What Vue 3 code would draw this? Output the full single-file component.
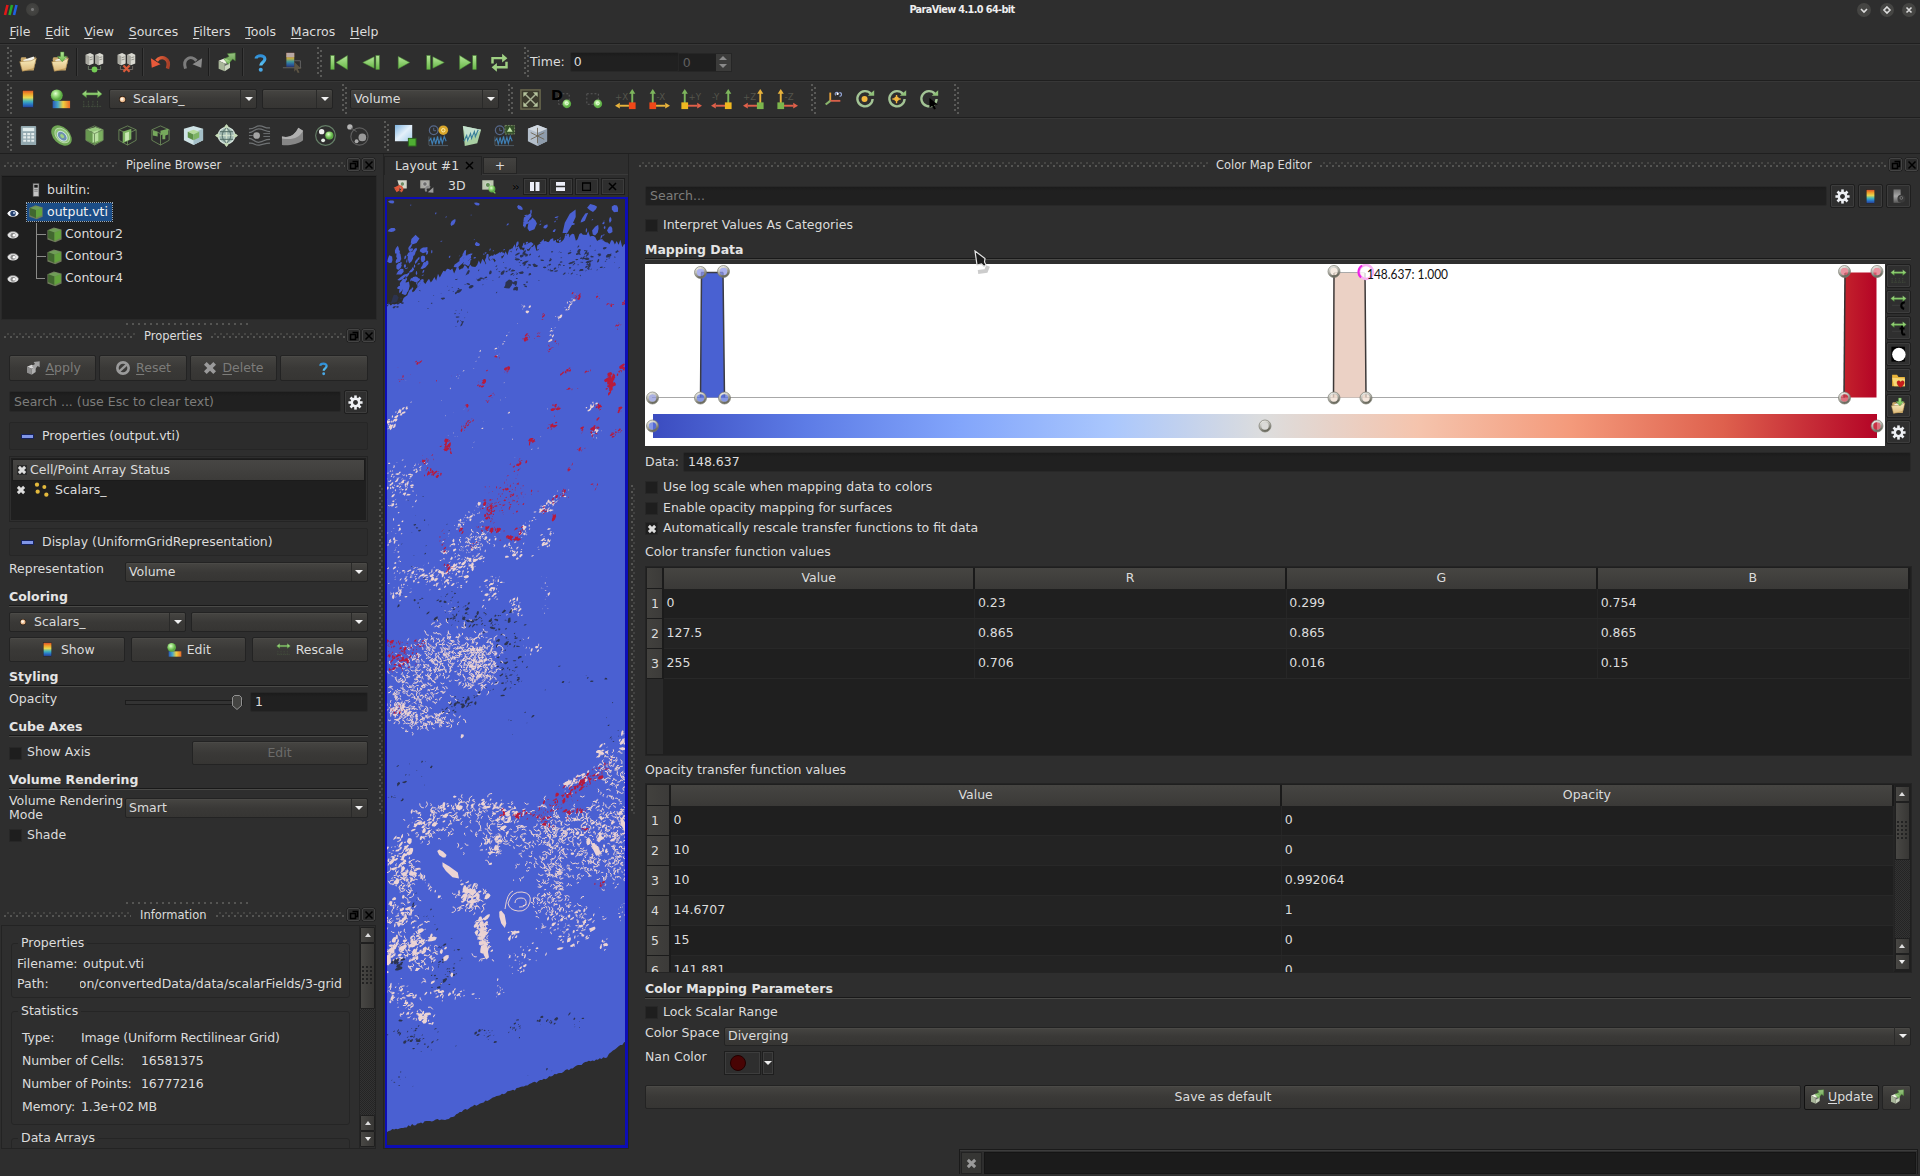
<script setup>
import { h } from 'vue'

const cube = (a, b, c) =>
  `<path d="M3 6l10-3 8 3-9 3z" fill="${a}"/><path d="M3 6l9 3v12l-9-4z" fill="${b}"/><path d="M12 9l9-3v11l-9 4z" fill="${c}"/>`
const rainbow = (x, y, w, hh) => `<rect x="${x}" y="${y}" width="${w}" height="${hh}" fill="url(#rainbowV)" stroke="#222" stroke-width=".6"/>`
const server = (x) =>
  `<path d="M${x} 3l5-2 4 2v10l-5 2-4-2z" fill="#d8d8d0"/><path d="M${x} 3l4 1.500v10.500l-4-2z" fill="#a8a8a0"/><path d="M${x + 4.5} 6.500l3.500-1M${x + 4.5} 9l3.500-1" stroke="#77776f" stroke-width=".8"/>`
const folder =
  '<path d="M3 8l1-2h5l1 2h6l4-3v4l-2 12H5z" fill="#c9a86a"/><path d="M6 9l12-4 2 8-12 4z" fill="#f6f6f0"/><path d="M2 11l13-1 6-3-3 12-13 3z" fill="url(#folderG)" stroke="#a88446" stroke-width=".7"/>'
const greenArrow = (s) => `<g stroke="#4b8a35" stroke-width=".6" fill="url(#greenG)">${s}</g>`
const axis = (lbl, lx, ox, vcol, hcol, bcol, dir) =>
  `<text x="${lx}" y="12" font-family="DejaVu Sans" font-size="9" fill="#55554c">${lbl}</text>
   <path d="M${ox} 16V5" stroke="${vcol}" stroke-width="2"/><path d="M${ox} 1l3.200 5h-6.400z" fill="${vcol}"/>
   <path d="M${ox} 18.500h${dir * 13}" stroke="${hcol}" stroke-width="2"/><path d="M${ox + dir * 18} 18.500l${-dir * 5}-3v6z" fill="${hcol}"/>
   <rect x="${ox - 3.5}" y="15" width="7" height="7" fill="${bcol}"/>`
const G = '#7cb55c', Y = '#e8b33c', R = '#e0604a'
const wire = '<path d="M3 6l9-4 9 4v11l-9 5-9-5zM3 6l9 4 9-4M12 10v12" fill="none" stroke="#6c8a5a" stroke-width=".9"/>'
const gear = (() => {
  let d = ''
  for (let i = 0; i < 8; i++) d += `<rect x="10.200" y="2" width="3.600" height="6" transform="rotate(${i * 45} 12 12)"/>`
  return `<g fill="#eef0f4">${d}</g><circle cx="12" cy="12" r="5.200" fill="none" stroke="#eef0f4" stroke-width="3.400"/>`
})()
const wave = '<path d="M2 18l2-3 1.500 6 2-7 1.500 7 2-8 1.500 8 2-7 1.500 6 2-7 2 5" fill="none" stroke="#3f7fb4" stroke-width="1.200"/><path d="M2 22.500h20M2 13v9" stroke="#5c6c78" stroke-width=".7"/>'
const clock = '<circle cx="7" cy="6.500" r="4.500" fill="none" stroke="#56688a" stroke-width="1.300"/><path d="M7 4v3h2.500" stroke="#56688a" fill="none"/>'
const rot = '<path d="M18.500 6.500A8.300 8.300 0 1 0 20.300 12" fill="none" stroke="#a3c495" stroke-width="2.600"/><path d="M15 8.500h7v-6z" fill="#8fc079"/>'
const rescale = '<path d="M1 6.500l5-4v2.800h12V2.500l5 4-5 4V7.700H6v2.800z" fill="url(#greenG)" stroke="#4b7a3c" stroke-width=".5"/>'
const cubeArrow = (c, a, b) => `<path d="M3 10l7-3 6 3-6 3z" fill="${c}"/><path d="M3 10l7 3v9l-7-3z" fill="${a}"/><path d="M10 13l6-3v8l-6 4z" fill="${b}"/>`
const qmark = '<path d="M7 7.500C7 3.500 17 2.800 17 8c0 3.500-4.700 3.800-4.700 7.500" fill="none" stroke="url(#blueG)" stroke-width="3.600"/><circle cx="12.300" cy="20.300" r="2.300" fill="#49a8e6"/>'

const icons = {
  open: folder,
  recent: folder + '<path d="M12 0h4v5h3.500l-5.500 6-5.500-6H12z" fill="url(#greenG)" stroke="#4b8a35" stroke-width=".6"/>',
  connect: server(2) + server(13) + '<path d="M5 16v4h14v-4" stroke="#6f7f6a" fill="none"/><circle cx="12" cy="20" r="3.300" fill="#74cc55"/>',
  disconnect: server(2) + server(13) + '<path d="M5 16v4h14v-4" stroke="#776f6a" fill="none"/><path d="M8.500 15.500l7 7m0-7l-7 7" stroke="#d95a3a" stroke-width="2.600"/>',
  undo: '<path d="M20 19C24 7 13 3 7.500 10" fill="none" stroke="url(#redG)" stroke-width="4"/><path d="M1 7l1 11 10-4z" fill="#e8593a"/>',
  redo: '<path d="M4 19C0 7 11 3 16.500 10" fill="none" stroke="#7c7c7c" stroke-width="3.400"/><path d="M23 7l-1 11-10-4z" fill="#8b8b8b"/>',
  apply: cubeArrow('#f0f3e6', '#a9b79a', '#cbd6bf') + '<path d="M10 14l4-2v2l-4 2z" fill="#666"/>' + greenArrow('<path d="M9 8l6-3-2-3 9-1v9l-3-2-5 6z" fill-opacity=".8"/>'),
  help: qmark,
  probe: '<rect x="5" y="1" width="9" height="16" fill="url(#rainbowV)" opacity=".75"/><rect x="5" y="1" width="9" height="5" fill="#b8a8a4"/><path d="M1 18h21M14 10h7v8" stroke="#6a6a6a" fill="none"/><path d="M14 11l8 8-4 .300 2 4-2 .700-2-4-2 2.500z" fill="#5d5544"/>',
  first: greenArrow('<rect x="2" y="4" width="4" height="16"/><path d="M21 4v16L8 12z"/>'),
  prev: greenArrow('<rect x="17" y="4" width="4" height="16"/><path d="M15 5.500v13L2 12z"/>'),
  play: greenArrow('<path d="M6 5v14L19 12z"/>'),
  next: greenArrow('<rect x="2" y="4" width="4" height="16"/><path d="M9 5.500v13L22 12z"/>'),
  last: greenArrow('<rect x="18" y="4" width="4" height="16"/><path d="M3 4v16l13-8z"/>'),
  loop: '<path d="M4 13V7h12M20 11v6.500H8" fill="none" stroke="#9fd083" stroke-width="2.800"/><path d="M15 2l6 5-6 5zM9 12.500l-6 5 6 5z" fill="#9fd083"/>',
  bar: rainbow(6, 2.5, 12, 19),
  editmap: '<rect x="4" y="14" width="19" height="8" fill="url(#rainbowH)"/><circle cx="8.500" cy="8" r="6.500" fill="url(#greenR)"/>',
  rescale: rescale + '<path d="M2 20h20M3 14v7M8 14v7M13 14v7M18 14v7" stroke="#45513f" stroke-width="1" stroke-dasharray="2 1"/>',
  rescaleC: rescale + '<path d="M3 16h18" stroke="#444"/><path d="M21 12c-6-1-7 8-1 9" fill="none" stroke="#000" stroke-width="3"/>',
  rescaleT: rescale + '<path d="M3 16h18" stroke="#444"/><path d="M17 8v9c0 4 2 4 4.500 3M13.500 12h7" fill="none" stroke="#000" stroke-width="3"/>',
  reset: '<rect x="2" y="2" width="20" height="20" fill="#3b3a2c" stroke="#6a694f" stroke-width="1.500"/><path d="M6 6l12 12M18 6L6 18" stroke="#a9b394" stroke-width="1.500"/><path d="M4.500 4.500h5l-5 5zM19.500 4.500v5l-5-5zM4.500 19.500v-5l5 5zM19.500 19.500h-5l5-5z" fill="#b4c39c"/>',
  zoomD: '<rect x="8" y="6" width="11" height="11" fill="none" stroke="#5d5d5d" stroke-dasharray="2 2"/><text x="0" y="12.500" font-family="DejaVu Sans" font-weight="bold" font-size="15" fill="#000">D</text><circle cx="16.500" cy="16.500" r="4.500" fill="url(#greenR)"/><circle cx="16.500" cy="16" r="1.500" fill="none" stroke="#e8ffd8"/>',
  zoomB: '<rect x="4" y="6" width="12" height="11" fill="none" stroke="#5d5d5d" stroke-dasharray="2 2"/><circle cx="15.500" cy="16.500" r="4.500" fill="url(#greenR)"/><circle cx="15.500" cy="16" r="1.500" fill="none" stroke="#e8ffd8"/>',
  px: axis('+X', 0, 18, G, Y, '#f04818', -1), mx: axis('-X', 10, 6, G, Y, '#f04818', 1),
  py: axis('+Y', 10, 6, G, R, '#f0b820', 1), my: axis('-Y', 1, 18, G, R, '#f0b820', -1),
  pz: axis('+Z', 0, 18, Y, R, '#7cb54c', -1), mz: axis('-Z', 10, 6, Y, R, '#7cb54c', 1),
  orient: '<path d="M9 14V5" stroke="#e8a33c" stroke-width="2"/><path d="M9 14h11" stroke="#d8604a" stroke-width="2"/><path d="M9 14l-5 4" stroke="#8ab56c" stroke-width="2.400"/><path d="M18 6c-2-3-5 0-3 2M19 5c3 0 3 4 0 4" fill="none" stroke="#94a6d8" stroke-width="1.200"/><circle cx="17" cy="6.500" r="1.200" fill="#fff"/>',
  center: rot + '<circle cx="11.500" cy="12" r="3.300" fill="#f3b73e"/>',
  resetc: rot + '<path d="M11.500 7.500v9M7 12h9" stroke="#f3b73e" stroke-width="1.500"/><circle cx="11.500" cy="12" r="2.600" fill="#f3b73e"/>',
  pick: rot + '<path d="M12.500 11l9 7-4 .500 2 4-2 1-2-4-3 2z" fill="#000"/>',
  calc: '<rect x="4" y="2" width="16" height="20" rx="1" fill="#93a9b0"/><rect x="6" y="4" width="12" height="3.500" fill="#e2eeee"/><path d="M6.500 10.500h12M6.500 14h12M6.500 17.500h12" stroke="#e4ecec" stroke-width="2.300" stroke-dasharray="3 1.200"/>',
  contour: '<ellipse cx="12" cy="12" rx="12.500" ry="8.500" transform="rotate(45 12 12)" fill="#6fa655"/><ellipse cx="12.500" cy="11.500" rx="9" ry="6" transform="rotate(45 12 12)" fill="#8cc474" stroke="#bcd9ac"/><ellipse cx="13" cy="12" rx="6" ry="4" transform="rotate(45 12 12)" fill="#6c8fae" stroke="#cfe0ea"/><ellipse cx="13" cy="12" rx="2.500" ry="1.600" transform="rotate(45 12 12)" fill="#9fd083"/>',
  clip: cube('#97c77d', '#67994f', '#7cb060') + '<path d="M10 8l6-1.500v11l-6 2z" fill="#b9e0a0"/>' + wire,
  slice: wire + '<path d="M7 8l9-3v11l-9 4z" fill="#7eb463"/><path d="M9.500 9.500l4-1.500v8.500l-4 1.500z" fill="#c9e8b5"/>',
  thresh: wire + '<path d="M4 7l5 1v5l-5-1zM12 7l8-2v6l-3 1v4h-3v-5l-2 1z" fill="#76a95c"/>',
  extract: '<path d="M2 5l10-3 10 3v12l-10 5-10-5z" fill="#cfe3e6"/><path d="M12 9v13l10-5V5z" fill="#a4bfc8"/><path d="M6 8l6-2 6 2-6 3z" fill="#b6db9b"/><path d="M6 8l6 3v6l-6-3z" fill="#5d9146"/><path d="M12 11l6-3v6l-6 3z" fill="#7eb463"/>',
  glyph: '<circle cx="12" cy="12" r="8.500" fill="#9fb8b0" stroke="#d8e6df" stroke-width="1.500"/><path d="M12 1v22M1 12h22" stroke="#cfe0cc" stroke-width="1.500"/><path d="M12 4c-6 5-6 11 0 16M12 4c6 5 6 11 0 16M5 8h14M5 16h14" fill="none" stroke="#4f6b63"/><path d="M12 0l3 4H9zM12 24l3-4H9zM0 12l4-3v6zM24 12l-4-3v6z" fill="#c6dcb8"/>',
  stream: '<path d="M1 5c7 0 6-3 11-3s6 3 11 2M1 9c5 0 5-4 10-4s7 3 12 3M1 15c5 0 6 5 11 4s5-3 11-3M1 20c6-1 6 3 11 2s6-2 11-2M1 12h4" fill="none" stroke="#6f7274" stroke-width="1.300"/><circle cx="9" cy="12" r="3.500" fill="#a4a4a4"/><path d="M16 10h7M16 13h7" stroke="#6f7274"/>',
  warp: '<path d="M1 13c8 2 14-2 17-9l5 3v10c-5 4-15 6-22 5z" fill="#868686"/><path d="M1 13c8 2 14-2 17-9l5 3c-4 8-12 10-22 8z" fill="#b0b0b0"/>',
  group: '<circle cx="12" cy="12" r="10.300" fill="none" stroke="#647d66" stroke-width="1.200"/><circle cx="16" cy="12" r="4.300" fill="url(#greenR)"/><circle cx="8" cy="8" r="2.800" fill="#eee"/><circle cx="9.500" cy="17" r="2" fill="#e6eee6"/>',
  level: '<circle cx="13" cy="13" r="9" fill="none" stroke="#5e5e5e" stroke-width="1.200"/><circle cx="16" cy="14" r="4" fill="#999"/><circle cx="3" cy="3" r="2.800" fill="#b5b5b5"/><circle cx="10" cy="18" r="2" fill="#aaa"/><path d="M4 4l6 4" stroke="#666"/>',
  select: '<rect x="1" y="1" width="18" height="17" fill="url(#skyG)"/><rect x="15" y="15" width="8" height="8" fill="#4fae33" stroke="#2c661d"/>',
  selT: clock + '<circle cx="17" cy="6.500" r="5" fill="#d9a72c"/><circle cx="17" cy="6.500" r="1.800" fill="none" stroke="#fff0b0"/>' + wave,
  selW: '<path d="M3 2l19 4-4 14-13 3z" fill="#a9cfa3"/><path d="M3 2l19 4-15 13z" fill="#c5e1cf"/><path d="M4 18l3-6 1 5 3-7 1 5 3-7 1 5 3-7" fill="none" stroke="#3a7f98" stroke-width="1.200"/>',
  selT2: clock + '<rect x="12.500" y="1.500" width="10" height="9" fill="#34502a" stroke="#748560" stroke-dasharray="2 1"/><path d="M17.500 3l3 5h-6z" fill="#bfe3a4"/>' + wave,
  box: '<path d="M2 5l10-4 10 4v13l-10 5-10-5z" fill="#b4bfcb"/><path d="M12 9v14l10-5V5z" fill="#8e9cac"/><path d="M2 5l10 4 10-4-10-4z" fill="#d0d8e0"/><path d="M12 4v16M5 9l14 7M19 9L5 16" stroke="#6b6250" stroke-width=".9"/>',
  gear,
  greyapply: cubeArrow('#d8d8d8', '#8f8f8f', '#b0b0b0') + '<path d="M10 9l5-3-2-3 9-1v9l-3-2-4 5z" fill="#a2a2a2"/>',
  no: '<circle cx="12" cy="12" r="8.500" fill="none" stroke="#9a9a9a" stroke-width="4"/><path d="M6.500 17l11-10" stroke="#9a9a9a" stroke-width="3.500"/>',
  del: '<path d="M4 4l16 16M20 4L4 20" stroke="#9a9a9a" stroke-width="6.500"/>',
  cross: '<path d="M4.500 4.500l15 15M19.500 4.500l-15 15" stroke="#dedede" stroke-width="7"/>',
  points: '<g fill="#e3b93c"><circle cx="6" cy="4" r="3.200"/><circle cx="17" cy="7.500" r="3"/><circle cx="7" cy="14.500" r="3.200"/><circle cx="20" cy="19" r="3.200"/></g>',
  dot: '<circle cx="12" cy="12" r="7.500" fill="#2a1a10"/><circle cx="12" cy="12" r="6" fill="#e9b98c"/><circle cx="11" cy="11" r="3.500" fill="#fff3e4"/>',
  cube: '<path d="M2 6l9-4 11 3v14l-9 4-11-4z" fill="#6f7a5c"/>' + cube('#6f9d57', '#41682f', '#62a33c'),
  server: '<rect x="7" y="1" width="10" height="22" fill="#c4c4c4" stroke="#555"/><rect x="9" y="3" width="6" height="5" fill="#1c1c1c"/><path d="M9 11h6M9 14h6" stroke="#777" stroke-width="1.500"/>',
  eye: '<ellipse cx="12" cy="12" rx="11" ry="7" fill="#e4e4e4"/><circle cx="12" cy="12.500" r="5" fill="#8b8b8b"/><circle cx="14" cy="12.500" r="2.500" fill="#fff"/><path d="M1 11C6 3 18 3 23 11" fill="none" stroke="#777" stroke-width="1.500"/>',
  eyeB: '<ellipse cx="12" cy="12.500" rx="11" ry="7" fill="#f4f6fa"/><circle cx="12" cy="13" r="5.500" fill="#24406e"/><circle cx="14" cy="12" r="2" fill="#bcd0ee"/><path d="M1 11C6 3 18 3 23 11" fill="none" stroke="#222" stroke-width="2"/>',
  camU: '<path d="M7 2h15v13H11z" fill="#d3d6c6"/><circle cx="15" cy="8" r="3.500" fill="#6d8a62" stroke="#efefef"/><path d="M12 20c5-3 3-9-3-8" fill="none" stroke="#d95a3a" stroke-width="3.500"/><path d="M1 14l10-5-1 11z" fill="#e0593a"/><path d="M2 15l4 6 4-3z" fill="#e0593a"/>',
  camR: '<path d="M2 2h15v13H2z" fill="#a8a8a2"/><circle cx="9.500" cy="8" r="3.500" fill="#6d6d6d" stroke="#ccc"/><path d="M12 20c-3-4 0-9 6-7" fill="none" stroke="#8a8a8a" stroke-width="3"/><path d="M23 13v9l-9-1z" fill="#9a9a9a"/>',
  camZ: '<path d="M2 2h18v15H2z" fill="#bdc8b0"/><circle cx="11" cy="9.500" r="4" fill="#5f8a52" stroke="#efefef"/><circle cx="17.500" cy="16" r="5.500" fill="url(#greenR)"/><path d="M20 20l3 3" stroke="#7cc95c" stroke-width="2"/>',
  greybar: '<rect x="5" y="2" width="10" height="19" fill="url(#greyV)"/><circle cx="16" cy="15" r="5.500" fill="#3a3a3a"/><circle cx="16" cy="14" r="2" fill="none" stroke="#888"/>',
  circle: '<rect x="2" y="1" width="19" height="21" fill="#000"/><ellipse cx="12.500" cy="12" rx="9.500" ry="9.500" fill="#fff"/>',
  fav: '<path d="M3 4h7l2 3h9v13H3z" fill="#e7b23a"/><path d="M3 8l3 12h15V9z" fill="#f8d874"/><path d="M15 22c-9-6-4-13 0-8 4-5 9 2 0 8z" fill="#c81c1c" stroke="#801010" stroke-width=".5"/>'
}
const Ico = (p) => h('svg', { viewBox: '0 0 24 24', width: p.s || 24, height: p.s || 24, class: 'ico', innerHTML: icons[p.n] })
Ico.props = ['n', 's']

const menus = ['File', 'Edit', 'View', 'Sources', 'Filters', 'Tools', 'Macros', 'Help']
const bar1 = ['open', 'recent', '|', 'connect', 'disconnect', '|', 'undo', 'redo', '|', 'apply', '|', 'help', 'probe']
const vcr = ['first', 'prev', 'play', 'next', 'last', 'loop']
const cams = ['reset', 'zoomD', 'zoomB', 'px', 'mx', 'py', 'my', 'pz', 'mz']
const centers = ['orient', 'center', 'resetc', 'pick']
const filters = ['calc', 'contour', 'clip', 'slice', 'thresh', 'extract', 'glyph', 'stream', 'warp', 'group', 'level']
const sels = ['select', 'selT', 'selW', 'selT2', 'box']
const sideIcons = ['rescale', 'rescaleC', 'rescaleT', 'circle', 'fav', 'recent', 'gear']
const colorRows = [['0', '0.23', '0.299', '0.754'], ['127.5', '0.865', '0.865', '0.865'], ['255', '0.706', '0.016', '0.15']]
const opacityRows = [['0', '0'], ['10', '0'], ['10', '0.992064'], ['14.6707', '1'], ['15', '0'], ['141.881', '0']]
const stats = [['Type:', 'Image (Uniform Rectilinear Grid)', 59], ['Number of Cells:', '16581375', 119], ['Number of Points:', '16777216', 119], ['Memory:', '1.3e+02 MB', 59]]

const nodes = [
  [7.5, 134, '#8f97d8'], [55.5, 134, '#5d74dc'], [79.500, 134, '#5d74dc'], [55.500, 8.500, '#8f97e8'], [78.500, 7.500, '#8f97e8'],
  [689, 7.500, '#f3e6da'], [689, 134, '#f0ddd0'], [721, 134, '#f0ddd0'],
  [1199.500, 134, '#d04050'], [1199.500, 7.500, '#e07080'], [1232, 7.500, '#e07080'],
  [7.500, 162, '#5d74dc'], [620, 162, '#d8d8d4'], [1232, 162, '#d04050']
]

/* volume rendering: seeded speckle clusters */
let seed = 20417
const rnd = () => ((seed = (seed * 1664525 + 1013904223) % 4294967296) / 4294967296)
const gs = () => (rnd() + rnd() + rnd() - 1.5) / 1.1
const edge = (pts, jx) => {
  let out = []
  for (let i = 0; i < pts.length - 1; i++) {
    const [x1, y1] = pts[i], [x2, y2] = pts[i + 1]
    const n = Math.max(2, Math.round((x2 - x1) / 1.8))
    for (let k = 0; k < n; k++) out.push([(x1 + ((x2 - x1) * k) / n).toFixed(1), (y1 + ((y2 - y1) * k) / n + (rnd() - 0.5) * jx).toFixed(1)])
  }
  out.push(pts[pts.length - 1])
  return out
}
const top = edge([[0, 108], [13, 102], [33, 85], [60, 73], [83, 66], [113, 58], [126, 49], [153, 49], [173, 40], [203, 36], [226, 43], [239, 46]], 8)
const bottom = edge([[0, 932], [43, 922], [60, 920], [93, 904], [126, 891], [146, 884], [173, 874], [200, 863], [220, 858], [226, 851], [239, 843]], 2.2)
const body = 'M' + top.map((p) => p.join(' ')).join('L') + 'L' + bottom.reverse().map((p) => p.join(' ')).join('L') + 'Z'

const blob = (x, y, a, b, t) => {
  const n = 7, c = Math.cos(t), s = Math.sin(t)
  let d = ''
  for (let i = 0; i < n; i++) {
    const g = (i / n) * 6.283, k = 0.65 + rnd() * 0.6
    const u = Math.cos(g) * a * k, v = Math.sin(g) * b * k
    d += (i ? 'L' : 'M') + (x + u * c - v * s).toFixed(1) + ' ' + (y + u * s + v * c).toFixed(1)
  }
  return d + 'Z'
}
// cluster: x, y, rx, ry, tilt(deg), count, grain
const scatter = (list, tilt, k = 1, m = 1) =>
  list.map(([x, y, rx, ry, deg, n, g]) => {
    let d = ''
    const t = (deg * Math.PI) / 180, c = Math.cos(t), s = Math.sin(t)
    for (let i = 0; i < n * m; i++) {
      const u = gs() * rx, v = gs() * ry
      const len = g * k * (0.45 + rnd() * rnd() * 1.8)
      d += blob(x + u * c - v * s, y + u * s + v * c, len, len * (0.3 + rnd() * 0.35), ((tilt + (rnd() - 0.5) * 80) * Math.PI) / 180)
    }
    return d
  }).join('')
const worms = (list) =>
  list.map(([x, y, rx, ry, deg, n, g]) => {
    let d = ''
    const t = (deg * Math.PI) / 180, c = Math.cos(t), s = Math.sin(t)
    const f = (q) => q.toFixed(1)
    for (let i = 0; i < n; i++) {
      const u = gs() * rx, v = gs() * ry
      const a = rnd() * 6.28, l = g * (0.6 + rnd())
      d += `M${f(x + u * c - v * s)} ${f(y + u * s + v * c)}q${f(Math.cos(a) * l)} ${f(Math.sin(a) * l)} ${f(Math.cos(a + 0.9) * l * 1.6)} ${f(Math.sin(a + 0.9) * l * 1.6)}`
    }
    return d
  }).join('')

const islands =
  scatter([[24, 62, 16, 22, -50, 30, 3], [20, 85, 18, 12, -30, 20, 4], [77, 60, 9, 7, 0, 16, 3.6], [110, 50, 60, 8, -15, 16, 1.4], [60, 30, 60, 28, 0, 10, 1.4], [180, 28, 55, 14, 0, 18, 1.6], [140, 18, 8, 12, 20, 8, 2.6], [150, 46, 90, 4, -14, 36, 3]], -55) +
  blob(183, 23, 12, 4.500, -1.15) + blob(206, 9, 5.500, 4, -0.3) + blob(145, 26, 8, 4.500, -0.9) + blob(228, 9, 4, 4, 0) + blob(223, 31, 5, 2.500, -1.3) + blob(197, 19, 6, 2, -0.9) + blob(66, 23, 4, 2, -0.9) + blob(28, 41, 6, 3, -0.9) + blob(37, 51, 5, 3, 0) + blob(5, 31, 4, 2.500, 0) + blob(3, 61, 3, 4, 0) + blob(90, 5, 3.500, 1.500, 0.2) + blob(133, 9, 3, 2, 0.7) + blob(90, 45, 3, 2, 0) + blob(4, 3, 3, 1.500, 0)
const holes = scatter([
  [185, 62, 60, 16, -8, 80, 1.8], [198, 62, 8, 14, 0, 26, 2.3], [128, 78, 30, 14, -50, 34, 3], [100, 78, 45, 10, -22, 26, 2], [60, 92, 50, 10, -25, 16, 1.3], [8, 104, 10, 5, -20, 10, 3.5], [70, 119, 10, 8, 0, 12, 1.5],
  [35, 330, 35, 60, 0, 22, 1.2], [86, 420, 40, 15, 12, 70, 2], [112, 430, 26, 30, 0, 40, 1.8], [40, 400, 40, 10, 0, 20, 1.4], [122, 472, 22, 26, 0, 60, 1.6], [76, 503, 24, 8, -20, 40, 2], [130, 520, 18, 14, 0, 6, 1.3], [190, 478, 40, 15, 0, 8, 1.6],
  [24, 574, 28, 20, 0, 12, 1.5], [8, 597, 8, 4, 0, 8, 1.3], [225, 545, 10, 40, 0, 12, 1.2], [60, 765, 16, 22, 0, 40, 2], [12, 766, 8, 6, 0, 12, 3], [35, 722, 22, 26, 0, 16, 1.5], [30, 838, 32, 12, 10, 40, 1.8], [100, 836, 12, 8, 0, 18, 1.7], [130, 830, 12, 12, 0, 12, 1.7], [160, 822, 10, 12, -40, 12, 1.7], [190, 822, 8, 9, 0, 7, 1.5], [10, 883, 18, 10, 0, 8, 1.4], [160, 872, 30, 10, 0, 3, 1.3]
], -30, 0.8)
const whiteBlobs = scatter([
  [15, 212, 16, 3, -42, 18, 2], [4, 225, 4, 5, 0, 8, 2], [12, 285, 20, 22, -30, 80, 1.5], [30, 270, 14, 4, -40, 14, 1.4], [8, 335, 8, 30, 0, 22, 1.3],
  [78, 320, 22, 5, -42, 36, 1.3], [85, 343, 30, 14, -20, 80, 1.4], [76, 365, 24, 8, -18, 50, 1.8], [42, 376, 48, 14, 8, 120, 1.6], [12, 392, 14, 12, 0, 26, 1.5], [106, 390, 10, 20, 10, 36, 1.5], [128, 408, 7, 9, 0, 26, 1.5], [125, 352, 10, 8, 0, 24, 1.6], [157, 343, 16, 6, -45, 26, 1.6], [160, 308, 30, 5, -38, 38, 1.5], [139, 330, 6, 12, 30, 16, 1.4], [205, 206, 7, 4, -30, 8, 1.8], [184, 104, 12, 3, -55, 14, 1.6], [172, 118, 4, 4, 0, 6, 1.6], [165, 134, 3, 8, 20, 8, 1.3], [138, 107, 6, 6, 0, 6, 1.2], [208, 235, 7, 8, 0, 10, 1.3], [158, 390, 6, 28, 0, 12, 1.1], [62, 410, 6, 8, 0, 8, 1.3], [80, 170, 30, 5, -45, 7, 1.1], [115, 145, 30, 5, -60, 8, 1.1], [120, 220, 90, 50, 0, 22, .9], [145, 448, 14, 10, 0, 12, 1.2],
  [92, 462, 18, 22, 0, 70, 1.7], [16, 510, 18, 10, 10, 40, 1.6],
  [60, 611, 40, 12, -18, 46, 2], [110, 608, 30, 8, 8, 40, 1.9], [36, 630, 14, 16, 0, 30, 2], [14, 652, 16, 14, 0, 34, 2.2], [18, 678, 18, 18, 20, 40, 2.6], [42, 686, 24, 3, 50, 20, 1.4], [83, 696, 16, 11, 50, 40, 2.6], [96, 735, 7, 28, -8, 44, 2.8], [118, 618, 16, 16, 0, 30, 2.2], [106, 648, 14, 15, 0, 36, 2.4], [14, 716, 18, 14, 0, 36, 2.2], [26, 750, 32, 26, 0, 74, 2.5], [5, 752, 6, 22, 20, 24, 2.8], [60, 794, 40, 8, 8, 30, 1.9], [36, 818, 16, 6, 15, 24, 2.2], [16, 798, 18, 12, 30, 28, 2], [190, 738, 18, 8, -30, 18, 2.2], [216, 745, 5, 6, 0, 10, 1.6], [183, 722, 34, 18, 0, 56, 1.6], [236, 543, 3, 12, 0, 14, 2.2], [216, 551, 5, 7, 0, 12, 2], [188, 582, 28, 5, -28, 34, 2], [126, 734, 7, 4, -30, 8, 2.6], [205, 632, 28, 26, 0, 60, 2.3], [140, 755, 24, 12, 0, 22, 1.4], [132, 770, 10, 6, 0, 10, 1.3], [112, 790, 4, 10, 0, 10, 1.5], [74, 537, 3, 2, 0, 5, 1.3], [235, 715, 5, 12, 0, 10, 1.2]
], -45, 0.85, 1.15) + blob(62, 671, 11, 4, 0.7) + blob(55, 655, 6, 3, 0.8) + blob(115, 719, 9, 3, 1.3) + blob(209, 650, 8, 3, 1.1) + blob(98, 752, 9, 3, 1.4) + blob(236, 625, 7, 2.5, 1.3)
const whiteWorms = worms([
  [62, 455, 34, 30, 0, 230, 1.9], [93, 462, 22, 28, 0, 160, 2.4], [30, 492, 40, 28, 0, 190, 1.8], [16, 512, 20, 14, 10, 80, 2.1], [45, 522, 30, 9, -8, 90, 1.8], [30, 465, 26, 20, 0, 70, 1.5],
  [60, 612, 38, 16, -12, 44, 2.4], [110, 630, 36, 28, 0, 90, 2.4], [166, 632, 26, 26, 0, 120, 2.4], [166, 674, 16, 34, 0, 100, 2.3], [205, 622, 40, 34, -20, 130, 2.4], [205, 664, 38, 24, 0, 120, 1.8], [233, 620, 10, 60, 0, 70, 2], [224, 570, 15, 20, -40, 56, 2.2], [18, 676, 18, 22, 0, 50, 2.6], [85, 700, 14, 18, 30, 46, 2.6], [96, 738, 7, 26, -6, 40, 2.4], [26, 750, 30, 28, 0, 70, 2.4], [140, 655, 20, 30, 0, 40, 1.5], [160, 703, 20, 14, 0, 46, 1.9], [183, 718, 32, 18, 0, 50, 1.8], [80, 350, 34, 22, -30, 34, 1.5], [230, 662, 10, 26, 0, 50, 1.4], [48, 630, 36, 22, 0, 40, 1.9], [14, 716, 20, 18, 0, 30, 2.2], [16, 800, 22, 16, 20, 24, 2.2]
]) + 'M121 704q4-12 14-11t8 10q-3 10-12 9t-10-8M128 704q0-5 6-5t5 6q-3 4-7 3M118 710q2-16 8-18'
const reds = scatter([
  [190, 97, 4, 5, 0, 12, 1.7], [158, 117, 4, 3, 0, 6, 1.4], [140, 138, 4, 4, 0, 12, 1.8], [152, 136, 5, 3, 0, 5, 1.2], [165, 147, 9, 5, -30, 12, 1.3], [110, 158, 3, 3, 0, 6, 1.3], [120, 171, 5, 3, -40, 9, 1.6], [94, 185, 5, 3, -30, 14, 1.8], [31, 163, 4, 2, 0, 7, 1.4], [224, 183, 5, 11, 15, 46, 2.4], [235, 170, 3, 9, 25, 18, 2.1], [223, 106, 4, 3, 0, 7, 1.4], [237, 103, 2, 3, 0, 5, 1.6], [211, 97, 3, 3, 0, 5, 1.3], [231, 127, 4, 8, 20, 9, 1.1], [180, 172, 7, 2, -20, 9, 1.5], [200, 172, 6, 2, 0, 6, 1.3], [184, 191, 9, 3, 0, 6, 1.4], [168, 207, 4, 4, 0, 8, 1.6], [80, 208, 3, 4, 0, 7, 1.2], [103, 199, 9, 3, -40, 12, 1.2], [80, 226, 10, 3, -35, 18, 1.4], [60, 247, 5, 8, -10, 30, 1.9], [46, 274, 8, 5, 0, 24, 1.7], [38, 262, 10, 6, -40, 14, 1.2], [166, 226, 4, 8, 20, 14, 1.6], [145, 242, 3, 3, 0, 9, 1.7], [211, 206, 4, 5, 0, 12, 1.7], [228, 234, 7, 3, -35, 14, 2], [208, 230, 4, 10, 15, 24, 1.6], [193, 250, 4, 3, 0, 10, 1.7], [196, 233, 2, 5, 0, 6, 1.5], [183, 269, 4, 4, 0, 7, 1.4], [133, 265, 9, 4, -30, 14, 1.7], [208, 288, 4, 4, -40, 6, 1.2], [233, 210, 3, 8, 0, 9, 1.5], [14, 180, 6, 2, -30, 6, 1.1],
  [120, 298, 28, 20, -35, 90, 1.3], [103, 312, 7, 12, 0, 40, 1.6], [104, 330, 16, 3, 5, 26, 1.9], [122, 339, 8, 2.500, 0, 18, 2], [132, 332, 4, 4, 0, 10, 1.6], [166, 318, 3, 3, 0, 9, 2.2], [157, 312, 4, 3, 0, 8, 1.8], [178, 294, 5, 5, 0, 9, 1.5], [168, 302, 7, 5, -45, 10, 1.4], [60, 369, 4, 6, 0, 10, 1.7], [56, 340, 4, 20, 0, 12, 1.3], [74, 331, 3, 3, 0, 6, 1.6], [86, 345, 5, 5, 0, 6, 1.3], [60, 175, 60, 20, 0, 8, .9],
  [12, 457, 20, 15, -10, 120, 1.6], [30, 445, 10, 5, 0, 18, 1.2], [10, 512, 10, 6, 0, 14, 1.2], [3, 445, 4, 6, 0, 12, 2],
  [178, 596, 26, 8, -28, 46, 2.1], [203, 579, 18, 6, -30, 40, 1.9], [220, 567, 8, 3, -55, 12, 1.3], [152, 617, 26, 5, 5, 34, 1.7], [190, 612, 16, 3, 0, 18, 1.9], [116, 614, 4, 5, 0, 10, 1.6], [131, 617, 4, 4, 0, 9, 1.9], [158, 624, 8, 3, 30, 10, 1.6], [199, 630, 4, 3, 0, 5, 1.6], [216, 686, 8, 4, 0, 8, 1.1], [168, 608, 30, 9, -15, 24, 1]
], -50, 0.8)
</script>

<template>
  <div class="app">
    <svg class="defs" width="0" height="0">
      <defs>
        <linearGradient id="rainbowV" x2="0" y2="1"><stop offset="0" stop-color="#d8502c" /><stop offset=".2" stop-color="#f09a28" /><stop offset=".42" stop-color="#e8d850" /><stop offset=".62" stop-color="#48b8b8" /><stop offset=".8" stop-color="#2878c8" /><stop offset="1" stop-color="#283c90" /></linearGradient>
        <linearGradient id="rainbowH"><stop offset="0" stop-color="#2858b8" /><stop offset=".3" stop-color="#48a8c8" /><stop offset=".6" stop-color="#f0d040" /><stop offset="1" stop-color="#e86828" /></linearGradient>
        <linearGradient id="folderG" x2="0" y2="1"><stop offset="0" stop-color="#fbf0c4" /><stop offset="1" stop-color="#dcb878" /></linearGradient>
        <linearGradient id="greenG" x2="0" y2="1"><stop offset="0" stop-color="#b4e698" /><stop offset="1" stop-color="#68b848" /></linearGradient>
        <linearGradient id="redG"><stop offset="0" stop-color="#f0643c" /><stop offset="1" stop-color="#a84028" /></linearGradient>
        <linearGradient id="blueG" x2="0" y2="1"><stop offset="0" stop-color="#2f8fd8" /><stop offset="1" stop-color="#5cc4f4" /></linearGradient>
        <linearGradient id="skyG" x2="1" y2="1"><stop offset="0" stop-color="#7fb4e0" /><stop offset=".5" stop-color="#e4f0fa" /><stop offset="1" stop-color="#a8cdea" /></linearGradient>
        <linearGradient id="greyV" x2="0" y2="1"><stop offset="0" stop-color="#6f6f6f" /><stop offset=".5" stop-color="#a8a8a8" /><stop offset="1" stop-color="#555" /></linearGradient>
        <radialGradient id="greenR" cx=".4" cy=".35"><stop offset="0" stop-color="#e4ffd4" /><stop offset=".5" stop-color="#98dc7c" /><stop offset="1" stop-color="#5cac44" /></radialGradient>
        <linearGradient id="coolwarm"><stop offset="0" stop-color="#3b4cc0" /><stop offset=".125" stop-color="#5d7ce6" /><stop offset=".25" stop-color="#82a5fb" /><stop offset=".375" stop-color="#aac7fd" /><stop offset=".5" stop-color="#dddddd" /><stop offset=".625" stop-color="#f5c4ad" /><stop offset=".75" stop-color="#f49a7b" /><stop offset=".875" stop-color="#de604d" /><stop offset="1" stop-color="#b40426" /></linearGradient>
        <linearGradient id="ringG" x1="0" y1="0" x2=".4" y2="1"><stop offset="0" stop-color="#f4f4f0" /><stop offset=".55" stop-color="#b0b0a8" /><stop offset="1" stop-color="#6c6c60" /></linearGradient>
        <linearGradient id="redBar"><stop offset="0" stop-color="#c3222c" /><stop offset="1" stop-color="#b40426" /></linearGradient>
      </defs>
    </svg>

    <header class="titlebar">
      <svg class="logo" width="16" height="12" viewBox="0 0 16 12"><path d="M3 11L5.500 1" stroke="#e01818" stroke-width="2.600" /><path d="M7.500 11L10 1" stroke="#28a828" stroke-width="2.600" /><path d="M12 11l2.500-10" stroke="#2060e0" stroke-width="2.600" /></svg>
      <span class="orb"></span>
      <span class="wtitle">ParaView 4.1.0 64-bit</span>
      <svg class="wbtns" width="62" height="16" viewBox="0 0 62 16"><g fill="#454543"><circle cx="8" cy="8" r="7" /><circle cx="31" cy="8" r="7" /><circle cx="53" cy="8" r="7" /></g><g fill="none" stroke="#ddd" stroke-width="1.600"><path d="M5 7l3 3 3-3M31 5l3 3-3 3-3-3zM50.500 5.500l5 5m0-5l-5 5" /></g></svg>
    </header>
    <nav class="menubar"><span v-for="m in menus" :key="m"><u>{{ m[0] }}</u>{{ m.slice(1) }}</span></nav>

    <div class="toolbar">
      <i class="grip first"></i>
      <template v-for="(n, i) in bar1" :key="i"><i v-if="n === '|'" class="sep"></i><b v-else class="tb"><Ico :n="n" :s="21" /></b></template>
      <i class="grip"></i>
      <b v-for="n in vcr" :key="n" class="tb"><Ico :n="n" :s="21" /></b>
      <i class="grip"></i>
      <span class="time">Time:</span><div class="field tfield">0</div>
      <div class="spin"><span>0</span><em><i class="up"></i><i class="down"></i></em></div>
    </div>
    <div class="toolbar">
      <i class="grip first"></i>
      <b v-for="n in ['bar', 'editmap', 'rescale']" :key="n" class="tb"><Ico :n="n" :s="22" /></b>
      <div class="combo c1"><Ico n="dot" :s="11" /><span>Scalars_</span><i></i></div>
      <div class="combo c2"><i></i></div>
      <i class="grip g2"></i>
      <div class="combo c3"><span>Volume</span><i></i></div>
      <i class="grip g3"></i>
      <b v-for="n in cams" :key="n" class="tb"><Ico :n="n" :s="23" /></b>
      <i class="grip"></i>
      <b v-for="n in centers" :key="n" class="tb"><Ico :n="n" :s="22" /></b>
      <i class="grip g4"></i>
    </div>
    <div class="toolbar last">
      <i class="grip first"></i>
      <b v-for="n in filters" :key="n" class="tb w33"><Ico :n="n" :s="23" /></b>
      <i class="grip g5"></i>
      <b v-for="n in sels" :key="n" class="tb w33"><Ico :n="n" :s="23" /></b>
    </div>

    <main class="main">
      <aside class="left">
        <div class="dock tall"><i class="dots"></i><span>Pipeline Browser</span><i class="dots"></i><b class="db"><svg width="10" height="10"><path d="M3.500 1.500h5v5h-2M1.500 3.500h5v5h-5z" /></svg></b><b class="db"><svg width="10" height="10"><path d="M1.500 1.500l7 7m0-7l-7 7" /></svg></b></div>
        <div class="tree">
          <div class="trow"><i class="eye"></i><i class="stub"></i><Ico n="server" :s="14" /><span>builtin:</span></div>
          <div class="trow"><i class="eye"><Ico n="eyeB" :s="12" /></i><div class="sel"><Ico n="cube" :s="16" /><span>output.vti</span></div></div>
          <div v-for="n in 3" :key="n" class="trow"><i class="eye"><Ico n="eye" :s="12" /></i><i class="branch" :class="{ end: n === 3 }"></i><Ico n="cube" :s="17" /><span>Contour{{ n + 1 }}</span></div>
        </div>
        <div class="hsplit"><i class="dots"></i></div>
        <div class="dock"><i class="dots"></i><span>Properties</span><i class="dots"></i><b class="db"><svg width="10" height="10"><path d="M3.500 1.500h5v5h-2M1.500 3.500h5v5h-5z" /></svg></b><b class="db"><svg width="10" height="10"><path d="M1.500 1.500l7 7m0-7l-7 7" /></svg></b></div>
        <section class="props">
          <div class="btns dis">
            <button><Ico n="greyapply" :s="16" /><span><u>A</u>pply</span></button><button><Ico n="no" :s="16" /><span><u>R</u>eset</span></button><button><Ico n="del" :s="14" /><span><u>D</u>elete</span></button><button><Ico n="help" :s="15" /></button>
          </div>
          <div class="srow"><div class="field ph">Search ... (use Esc to clear text)</div><b class="sq"><Ico n="gear" :s="17" /></b></div>
          <div class="group"><i class="minus"></i>Properties (output.vti)</div>
          <div class="list"><div class="lhead"><i class="ck"><Ico n="cross" :s="10" /></i>Cell/Point Array Status</div><div class="lrow"><Ico n="cross" :s="10" /><Ico class="pts" n="points" :s="16" />Scalars_</div></div>
          <div class="group g6"><i class="minus"></i>Display (UniformGridRepresentation)</div>
          <div class="frow"><label>Representation</label><div class="combo f1"><span>Volume</span><i></i></div></div>
          <h4>Coloring</h4>
          <div class="frow"><div class="combo cs"><Ico n="dot" :s="10" /><span>Scalars_</span><i></i></div><div class="combo f1"><i></i></div></div>
          <div class="btns three"><button><Ico n="bar" :s="17" />Show</button><button><Ico n="editmap" :s="16" />Edit</button><button><Ico n="rescale" :s="15" />Rescale</button></div>
          <h4>Styling</h4>
          <div class="frow"><label>Opacity</label><div class="slider"><svg width="10" height="15"><path d="M.5 2.500l2-2h5l2 2v8l-4.500 4-4.500-4z" fill="#444442" stroke="#aaa" stroke-width=".8" /></svg></div><div class="field of">1</div></div>
          <h4>Cube Axes</h4>
          <div class="frow axes"><i class="cb"></i><span>Show Axis</span><button class="dim">Edit</button></div>
          <h4>Volume Rendering</h4>
          <div class="frow vr"><label class="two">Volume Rendering<br />Mode</label><div class="combo f1"><span>Smart</span><i></i></div></div>
          <div class="frow shade"><i class="cb"></i><span>Shade</span></div>
        </section>
        <div class="hsplit h2"><i class="dots"></i></div>
        <div class="dock inf"><i class="dots"></i><span>Information</span><i class="dots"></i><b class="db"><svg width="10" height="10"><path d="M3.500 1.500h5v5h-2M1.500 3.500h5v5h-5z" /></svg></b><b class="db"><svg width="10" height="10"><path d="M1.500 1.500l7 7m0-7l-7 7" /></svg></b></div>
        <div class="info">
          <div class="ibody">
            <div class="ig p"><span class="lg">Properties</span>
              <div class="ir"><span>Filename:</span><em>output.vti</em></div>
              <div class="ir path"><span>Path:</span><em><b>on/convertedData/data/scalarFields/3-grid</b></em></div>
            </div>
            <div class="ig s"><span class="lg">Statistics</span>
              <div v-for="s in stats" :key="s[0]" class="ir st"><span :style="{ width: s[2] + 'px' }">{{ s[0] }}</span>{{ s[1] }}</div>
            </div>
            <div class="ig d"><span class="lg">Data Arrays</span></div>
          </div>
          <div class="sb"><b><i class="up"></i></b><b class="thumb t1"></b><i class="track"></i><b><i class="up"></i></b><b><i class="down"></i></b></div>
        </div>
      </aside>

      <i class="vsplit"></i>

      <section class="mid">
        <div class="tabs"><div class="tab">Layout #1<svg width="9" height="9"><path d="M1 1l7 7m0-7l-7 7" stroke="#000" stroke-width="1.500" /></svg></div><div class="plus">+</div></div>
        <div class="viewbar">
          <Ico n="camU" :s="15" /><Ico n="camR" :s="15" /><span class="three-d">3D</span><Ico n="camZ" :s="15" />
          <span class="more">»</span>
          <b><svg width="10" height="9"><path d="M0 0h4v9H0zM5.500 0h4v9h-4z" fill="#eceef8" /></svg></b><b><svg width="10" height="9"><path d="M0 0h9v3.700H0zM0 5.300h9V9H0z" fill="#eceef8" /></svg></b><b><svg width="9" height="9"><path d="M.5 1h8v7.500h-8z" fill="none" stroke="#000" stroke-width="1.400" /></svg></b><b><svg width="9" height="9"><path d="M1 1l7 7m0-7l-7 7" stroke="#000" stroke-width="1.500" /></svg></b>
        </div>
        <div class="render">
          <svg width="239" height="946" viewBox="0 0 239 946">
            <path :d="body" fill="#4a60d2" />
            <path :d="islands" fill="#4a60d2" />
            <path :d="holes" fill="#2c3350" />
            <path :d="whiteBlobs" fill="#ecd4d4" />
            <path :d="whiteWorms" fill="none" stroke="#ead2d2" stroke-width="1" />
            <path :d="reds" fill="#b81a3c" />
          </svg>
        </div>
      </section>

      <i class="vsplit v2"></i>

      <section class="right">
        <div class="dock tall"><i class="dots"></i><span>Color Map Editor</span><i class="dots"></i><b class="db"><svg width="10" height="10"><path d="M3.500 1.500h5v5h-2M1.500 3.500h5v5h-5z" /></svg></b><b class="db"><svg width="10" height="10"><path d="M1.500 1.500l7 7m0-7l-7 7" /></svg></b></div>
        <div class="rbody">
          <div class="rsearch"><div class="field ph">Search...</div><b class="sq"><Ico n="gear" :s="17" /></b><b class="sq"><Ico n="bar" :s="17" /></b><b class="sq"><Ico n="greybar" :s="17" /></b></div>
          <div class="crow c0"><i class="cb"></i>Interpret Values As Categories</div>
          <h4>Mapping Data</h4>
          <div class="maprow">
            <svg class="map" width="1240" height="182" viewBox="0 0 1240 182">
              <rect width="1240" height="182" fill="#fff" />
              <path d="M7 133.500h1193" stroke="#a8a8a8" />
              <path d="M56.500 8.500H78L79.500 133.500H55.500z" fill="#4961d2" /><path d="M56.500 8.500L55.500 133.500M78 8.500L79.500 133.500M56 8.500h22" stroke="#3c3c44" stroke-width="1.500" />
              <path d="M689 8.500H720L721 133.500H688.500z" fill="#ebd1c5" /><path d="M689 9L688.500 133.500M720 9l1 124.500" stroke="#3c3838" stroke-width="1.500" /><path d="M689 8.500h31" stroke="#aaa" />
              <path d="M1200 8.500h31.500v125H1199z" fill="url(#redBar)" /><path d="M1200 9l-1 124.500" stroke="#333" stroke-width="1.500" />
              <rect x="8" y="150" width="1224" height="24" fill="url(#coolwarm)" />
              <g v-for="(n, i) in nodes" :key="i"><circle :cx="n[0]" :cy="n[1]" r="4" :fill="n[2]" fill-opacity=".75" /><circle :cx="n[0]" :cy="n[1]" r="4.800" fill="none" stroke="url(#ringG)" stroke-width="2.200" /><circle :cx="n[0]" :cy="n[1]" r="6" fill="none" stroke="#77776c" stroke-width=".7" /></g>
              <circle cx="721" cy="8" r="7" fill="#fff" fill-opacity=".8" stroke="#f8b0f4" stroke-width="2.500" /><path d="M717 1.500a7.500 7.500 0 0 0-1 12" fill="none" stroke="#f020e8" stroke-width="2" />
              <text x="722" y="15" textLength="81" lengthAdjust="spacingAndGlyphs" font-size="13" font-family="Lato, sans-serif" fill="#111">148.637: 1.000</text>
            </svg>
            <div class="side"><b v-for="n in sideIcons" :key="n" class="sq"><Ico :n="n" :s="17" /></b></div>
          </div>
          <div class="datarow"><span>Data:</span><div class="field">148.637</div></div>
          <div class="checks">
            <div class="crow"><i class="cb"></i>Use log scale when mapping data to colors</div>
            <div class="crow"><i class="cb"></i>Enable opacity mapping for surfaces</div>
            <div class="crow"><i class="cb"><Ico n="cross" :s="10" /></i>Automatically rescale transfer functions to fit data</div>
          </div>
          <div class="tl">Color transfer function values</div>
          <div class="table t1">
            <div class="tr th"><b></b><span v-for="c in ['Value', 'R', 'G', 'B']" :key="c">{{ c }}</span></div>
            <div v-for="(r, i) in colorRows" :key="i" class="tr"><b>{{ i + 1 }}</b><span v-for="(c, j) in r" :key="j">{{ c }}</span></div>
            <div class="rest"></div>
          </div>
          <div class="tl t2l">Opacity transfer function values</div>
          <div class="table t2">
            <div class="tin">
              <div class="tr th"><b></b><span>Value</span><span>Opacity</span></div>
              <div v-for="(r, i) in opacityRows" :key="i" class="tr"><b>{{ i + 1 }}</b><span v-for="(c, j) in r" :key="j">{{ c }}</span></div>
            </div>
            <div class="sb"><b><i class="up"></i></b><b class="thumb t3"></b><i class="track"></i><b><i class="up"></i></b><b><i class="down"></i></b></div>
          </div>
          <h4 class="hp">Color Mapping Parameters</h4>
          <div class="crow lock"><i class="cb"></i>Lock Scalar Range</div>
          <div class="prow"><label>Color Space</label><div class="combo f1"><span>Diverging</span><i></i></div></div>
          <div class="prow nan"><label>Nan Color</label><b class="nb"><i></i></b><b class="nd"><i class="down"></i></b></div>
          <div class="foot"><button class="save">Save as default</button><button class="upd"><Ico n="apply" :s="16" /><span><u>U</u>pdate</span></button><button class="ib"><Ico n="apply" :s="16" /></button></div>
        </div>
      </section>
    </main>
    <footer class="status"><div class="sbox"><b><Ico n="del" :s="11" /></b><div class="prog"></div></div></footer>

    <svg class="cursor" width="20" height="26" viewBox="0 0 20 26"><path d="M4 22l8-1 2-5" stroke="#0003" stroke-width="4" fill="none" /><path d="M1 1l10 7.500-.5 3.500 1.500 3-2 1.500-2.500-2.500-4.500 1z" fill="#1c1c1c" stroke="#e4e4e4" stroke-width="1.200" /></svg>
  </div>
</template>

<style>
html, body { margin: 0; background: #2e2e2e; overflow: hidden; }
</style>
<style scoped>
* { box-sizing: border-box; }
.app { position: relative; width: 1920px; height: 1176px; background: #2e2e2e; color: #dcdcdc; font: 12.5px/16px "DejaVu Sans", Verdana, sans-serif; display: flex; flex-direction: column; overflow: hidden; white-space: nowrap; }
i, em { font-style: normal; } b { font-weight: normal; }
.defs { position: absolute; }
.ico { flex: none; display: block; overflow: visible; }
.titlebar { height: 21px; display: flex; align-items: center; flex: none; padding-left: 2px; }
.orb { width: 13px; height: 13px; border-radius: 50%; background: radial-gradient(circle, #777 1px, #454543 2px, #3a3a38); margin: -2px 0 0 8px; }
.logo { margin-top: -1px; }
.wtitle { flex: 1; text-align: center; font: bold 10.8px "DejaVu Sans Condensed", "DejaVu Sans", sans-serif; color: #eee; padding-left: 29px; margin-top: -2px; letter-spacing: -.6px; }
.wbtns { margin-right: 2px; margin-top: -2px; }
.menubar { height: 22px; flex: none; display: flex; align-items: center; gap: 14.800px; padding-left: 9.500px; }
u { text-underline-offset: 2px; }
.toolbar { height: 37px; flex: none; display: flex; align-items: center; border-top: 1px solid #1f1f1f; box-shadow: inset 0 1px #373737; }
.toolbar.last { height: 36px; }
.tb { width: 32px; display: flex; justify-content: center; flex: none; }
.w33 { width: 33px; }
.sep { width: 2px; height: 28px; background: #1c1c1c; border-right: 1px solid #3a3a3a; }
.grip { width: 15px; height: 30px; flex: none; background: radial-gradient(circle at 1px 1px, #5a5a58 .7px, transparent 1.200px) 9px 0 / 30px 5px repeat-y, radial-gradient(circle at 1px 1px, #5a5a58 .7px, transparent 1.200px) 12px 3px / 30px 5px repeat-y; }
.grip.first { width: 12px; background-position: 7px 0, 10px 3px; }
.g5 { width: 14px; }
.time { margin-right: 5px; }
.field { background: linear-gradient(#1b1b1b, #202020 4px); border: 1px solid #282828; border-radius: 2px; display: flex; align-items: center; padding-left: 4px; }
.ph { color: #7d7d7b; }
.tfield { width: 109px; height: 20px; margin-right: 1px; padding-left: 3px; }
.spin { width: 54px; height: 19px; display: flex; background: #1f1f1f; border: 1px solid #262626; color: #606060; margin-left: -2px; }
.spin span { flex: 1; padding-left: 4px; line-height: 18px; }
.spin em { width: 15px; background: #3b3b3a; display: flex; flex-direction: column; justify-content: space-around; align-items: center; }
.up { border: 4px solid transparent; border-top: 0; border-bottom: 4px solid #ddd; }
.down { border: 4px solid transparent; border-bottom: 0; border-top: 4px solid #eee; }
.spin .up, .spin .down { border-bottom-color: #8a8a8a; } .spin .down { border-top-color: #8a8a8a; border-bottom: 0; }
.combo, button { background: linear-gradient(#464542, #3a3937 50%, #363533); border: 1px solid #232323; border-radius: 2px; box-shadow: inset 0 1px #4b4a47; color: #dcdcdc; font: inherit; }
.combo { height: 20px; display: flex; align-items: center; padding-left: 3px; }
.combo span { flex: 1; }
.combo > i { width: 16px; height: 18px; margin-left: auto; border-left: 1px solid #2a2a29; flex: none; display: flex; align-items: center; justify-content: center; }
.combo > i::before { content: ''; border: 4px solid transparent; border-bottom: 0; border-top: 4px solid #f0f0f0; }
.c1 { width: 148px; margin: 0 5px 0 1px; padding-left: 7px; } .c1 span { margin-left: 5px; }
.c2 { width: 71px; } .g2 { width: 17px; }
.c3 { width: 149px; } .g3 { width: 15px; }
.main { flex: 1; display: flex; border-top: 1px solid #1f1f1f; min-height: 0; }
.left { width: 377px; flex: none; display: flex; flex-direction: column; }
.dock { height: 15px; flex: none; display: flex; align-items: center; padding: 0 1px 0 4px; font-size: 11.500px; }
.dock.tall { height: 21px; }
.dock span { margin: 0 9px; }
.dots { flex: 1; height: 6px; background: radial-gradient(circle at 1px 1px, #5c5c5a .6px, transparent 1.300px) 0 3px / 6px 6px, radial-gradient(circle at 1px 1px, #4a4a48 .6px, transparent 1.300px) 3px 0 / 6px 6px; }
.db { width: 13px; height: 13px; border: 1px solid #444; border-radius: 2px; margin-left: 2px; display: flex; align-items: center; justify-content: center; background: #2a2a2a; box-shadow: 0 0 0 .5px #1c1c1c; }
.db svg { fill: none; stroke: #000; stroke-width: 1.500; flex: none; }
.left .dock { padding-right: 2px; }
.left .dock .dots:first-child { flex: 0 0 113px; }
.left .dock:not(.tall) .dots:first-child { flex-basis: 131px; }
.left .dock.inf .dots:first-child { flex-basis: 127px; }
.tree { height: 145px; margin: 0 0 0 1px; background: #1f1f1f; border: 1px solid #292929; box-shadow: inset 0 1px #181818; padding-top: 3px; flex: none; }
.trow { height: 22px; display: flex; align-items: center; }
.trow .eye { width: 25px; padding-left: 5px; height: 12px; display: flex; margin-top: 2px; }
.stub { width: 2px; }
.trow > span { margin-left: 2px; }
.trow .stub + .ico { margin: 0; }
.trow .stub + .ico + span { margin-left: 4px; }
.sel { display: flex; align-items: center; height: 18px; background: #1b4d87; outline: 1px dotted #9ab; color: #f2f2f2; padding: 0 4px 0 1px; gap: 3px; }
.branch { width: 10px; height: 22px; margin-left: 9px; border-left: 1px solid #8a8a88; background: linear-gradient(#8a8a88, #8a8a88) 0 11px / 100% 1px no-repeat; }
.branch.end { border-left-color: transparent; background: linear-gradient(#8a8a88, #8a8a88) -1px 11px / 100% 1px no-repeat, linear-gradient(#8a8a88, #8a8a88) 0 0 / 1px 12px no-repeat; background-origin: border-box; }
.hsplit { height: 8px; flex: none; display: flex; align-items: center; padding-left: 126px; } .hsplit .dots { flex: 0 0 124px; height: 3px; background: radial-gradient(circle at 1px 1px, #5c5c5a .6px, transparent 1.300px) 0 0 / 6px 6px; }
.h2 { margin-top: 56px; }
.props { margin: 0 0 0 9px; width: 358.500px; }
.btns { display: flex; gap: 3px; margin-top: 12px; height: 26px; }
.btns button { flex: 1; display: flex; align-items: center; justify-content: center; gap: 5px; padding: 0; }
.dis { color: #777; } .dis button { color: #7c7c7a; }
.srow { display: flex; gap: 3px; margin-top: 9px; height: 24px; }
.srow .field { flex: 1; height: 21px; margin-top: 1px; }
.sq { width: 24px; height: 24px; flex: none; border: 1px solid #1e1e1e; border-radius: 2px; box-shadow: inset 0 0 0 1px #3d3d3d; background: #2f2f2f; display: flex; align-items: center; justify-content: center; }
.group { margin-top: 8px; height: 28px; border: 1px solid #262626; background: #2c2c2c; border-radius: 2px; display: flex; align-items: center; padding-left: 11px; }
.g6 { margin-top: 6px; }
.minus { width: 13px; height: 5px; border: 1px solid #16225c; background: #8096e8; margin-right: 8px; }
.list { margin-top: 6px; height: 66px; background: #1f1f1f; border: 1px solid #242424; padding: 2px; box-shadow: inset 0 0 0 1px #2e2e2e; }
.lhead { height: 22px; background: linear-gradient(#474644, #3c3b39); border: 1px solid #1b1b1b; display: flex; align-items: center; padding-left: 4px; gap: 3px; }
.lhead .ck { background: #2a2a2a; }
.lrow { height: 18px; display: flex; align-items: center; padding-left: 4px; gap: 6px; } .pts { margin-left: 1px; }
.frow { display: flex; height: 20px; margin-top: 6px; align-items: center; }
.frow label { width: 116px; line-height: 14px; align-self: flex-start; }
.f1 { flex: 1; }
h4 { margin: 7px 0 0; font: bold 12.500px/16px "DejaVu Sans", sans-serif; border-bottom: 1px solid #191919; box-shadow: 0 1px #4a4a48; height: 17px; color: #e4e4e4; }
.cs { width: 177px; margin-right: 5px; padding-left: 8px; } .cs span { margin-left: 6px; }
.three { margin-top: 5px; height: 25px; gap: 6px; }
.slider { width: 118px; height: 5px; border: 1px solid #1c1c1c; background: #333; display: flex; align-items: center; justify-content: flex-end; margin-right: 7px; }
.of { flex: 1; height: 20px; }
.cb { width: 13px; height: 13px; background: #1e1e1e; border: 1px solid #272727; flex: none; display: flex; align-items: center; justify-content: center; }
.cb + span { margin-left: 5px; }
.axes { margin-top: 5px; height: 24px; } .axes button { width: 176px; height: 24px; margin-left: auto; color: #6c6c6a; } .axes span { margin-top: -2px; }
.vr { margin-top: 9px; } .frow .two { margin-top: -4px; }
.shade { height: 16px; margin-top: 9px; } .shade span { margin-top: -1px; }
.info { margin: 3px 0 0 1px; height: 224px; width: 375px; border: 1px solid #232323; display: flex; flex: none; }
.ibody { flex: 1; padding-left: 9px; overflow: hidden; }
.ig { width: 339px; border: 1px solid #252525; border-radius: 3px; margin-top: 17px; height: 55px; position: relative; padding-top: 10px; }
.lg { position: absolute; left: 6px; top: -9px; background: #2e2e2e; padding: 0 3px; }
.ig.s { height: 114px; margin-top: 13px; padding-top: 14px; } .ig.d { margin-top: 13px; }
.ir { display: flex; height: 20px; align-items: center; padding-left: 5px; } .ir span { width: 66px; flex: none; }
.ir span.lg { width: auto; }
.path span { width: 63px; } .path em { width: 262px; overflow: hidden; display: flex; justify-content: flex-end; } .path b { flex: none; }
.st { height: 23px; padding-left: 10px; letter-spacing: -.14px; }
.sb { width: 16px; display: flex; flex-direction: column; flex: none; padding: 1px 0; border-left: 1px solid #242424; }
.sb b { height: 16px; flex: none; border: 1px solid #1f1f1f; background: linear-gradient(90deg, #484744, #383735); display: flex; align-items: center; justify-content: center; border-radius: 1px; }
.sb .up, .sb .down { border-left-width: 3.500px; border-right-width: 3.500px; }
.sb .thumb { height: 66px; }
.sb .thumb::before { content: ''; width: 11px; height: 20px; background: radial-gradient(circle at 1px 1px, #222 .8px, transparent 1.200px) 0 0 / 4px 4px; }
.sb .thumb.t3 { height: 58px; }
.sb .track { flex: 1; background: repeating-conic-gradient(#242424 0 25%, #333 0 50%) 0 0 / 2px 2px; }
.vsplit { width: 6px; flex: none; margin-top: 331px; height: 330px; background: radial-gradient(circle at 1px 1px, #5c5c5a .6px, transparent 1.300px) 2px 0 / 10px 6px repeat-y, radial-gradient(circle at 1px 1px, #444 .6px, transparent 1.300px) 4px 3px / 10px 6px repeat-y; }
.mid { width: 246px; flex: none; height: 995px; display: flex; flex-direction: column; border: 1px solid #232323; border-top: 0; }
.v2 { width: 10px; }
.tabs { height: 21px; display: flex; align-items: flex-end; flex: none; border-bottom: 1px solid #3a3a3a; }
.tab { width: 98px; height: 19px; border: 1px solid #232323; border-bottom: 0; display: flex; align-items: center; padding-left: 10px; gap: 6px; margin-bottom: -1px; background: #2e2e2e; letter-spacing: -.1px; }
.tab svg { margin-top: -1px; }
.plus { width: 34px; height: 17px; background: linear-gradient(#434240, #383735); border: 1px solid #242424; text-align: center; margin-left: 1px; }
.viewbar { height: 22px; display: flex; align-items: center; padding-left: 9px; flex: none; }
.viewbar > b { width: 24px; height: 17px; margin-top: 1px; border: 1px solid #1d1d1d; box-shadow: inset 0 0 0 1px #3c3c3c; margin-left: 2px; display: flex; align-items: center; justify-content: center; flex: none; }
.viewbar .ico + .ico { margin-left: 11px; }
.three-d { margin: 0 15px 0 14px; }
.viewbar .more { margin: 2px 0 0 16px; width: 9px; font-weight: bold; font-size: 13px; color: #0a0a0a; text-shadow: 0 0 1px #555; }
.render { border: 3px solid #0d0db4; border-width: 2px 3px 3px 2px; margin-left: 1px; height: 951px; width: 243px; background: #2d2d2d; overflow: hidden; }
.render svg { display: block; }
.right { flex: 1; display: flex; flex-direction: column; }
.right .dock { padding: 0 2px 0 0; } .right .dock .dots:first-child { flex: 0 0 569px; } .right .dock span { margin: 0 8px; } .right .db { margin-left: 3px; }
.rbody { margin-left: 6px; width: 1266px; }
.rsearch { display: flex; gap: 3px; margin-top: 9px; height: 24px; } .rsearch .field { flex: 1; height: 20px; margin: 2px 0 0; } .rsearch .sq { width: 25px; }
.crow { display: flex; align-items: center; height: 20.500px; gap: 5px; }
.crow .cb { margin-top: 1px; }
.c0 { height: 16px; margin-top: 9px; }
.c0 + h4 { margin-top: 9px; }
.maprow { display: flex; gap: 1px; margin-top: 5px; height: 182px; }
.map { display: block; flex: none; }
.side { display: flex; flex-direction: column; gap: 2px; } .side .sq { height: 24px; width: 25px; }
.datarow { display: flex; margin-top: 6px; height: 20px; align-items: center; } .datarow span { width: 38px; } .datarow .field { flex: 1; height: 20px; }
.checks { margin-top: 5px; }
.tl { margin-top: 5px; }
.table { margin-top: 6px; border: 1px solid #242424; padding: 1px; background: #1f1f1f; overflow: hidden; width: 1266.500px; }
.t1.table { height: 190px; display: flex; flex-direction: column; }
.tr { display: flex; height: 30px; line-height: 27px; border-bottom: 1px solid #282828; background: #1f1f1f; }
.tr:nth-child(odd) { background: #232323; }
.tr b { width: 17px; background: linear-gradient(90deg, #42413e, #3c3b39); border-right: 2px solid #1b1b1b; border-bottom: 1px solid #1b1b1b; margin-bottom: -1px; padding-left: 4px; line-height: 29px; flex: none; }
.t2 .tr b { width: 24px; }
.tr span { flex: 1; padding-left: 2.500px; border-right: 1px solid #262626; }
.tr.th { height: 21px; line-height: 20px; border: 0; }
.tr.th span { text-align: center; background: linear-gradient(#464542, #3a3937); border-right: 2px solid #1a1a1a; padding: 0; }
.tr.th b { margin: 0; }
.rest { flex: 1; border-left: 16px solid #2a2a2a; }
.t2l { margin-top: 6px; }
.t2.table { height: 190px; display: flex; margin-top: 5px; } .tin { flex: 1; }
.hp.hp { margin-top: 8px; }
.lock { height: 16px; margin-top: 6px; }
.prow { display: flex; height: 19px; margin-top: 7px; } .prow label { width: 79px; line-height: 12px; } .prow .combo { height: 19px; }
.nan { height: 24px; margin-top: 5px; }
.nb { width: 37px; border: 1px solid #1e1e1e; box-shadow: inset 0 0 0 1px #3d3d3d; display: flex; align-items: center; padding-left: 5px; } .nb i { width: 16px; height: 16px; border-radius: 50%; background: #480404; border: 1px solid #200; }
.nd { width: 12px; margin-left: 1px; border: 1px solid #1e1e1e; box-shadow: inset 0 0 0 1px #3d3d3d; display: flex; align-items: center; justify-content: center; }
.foot { display: flex; gap: 3px; margin-top: 10px; height: 25px; } .save { flex: 1; height: 24px; } .upd { width: 75px; display: flex; align-items: center; gap: 3px; padding: 0 0 0 4px; border-color: #111; } .ib { width: 29px; display: flex; align-items: center; justify-content: center; padding: 0; }
.status { height: 27px; flex: none; display: flex; justify-content: flex-end; padding: 0 2px 2px 0; }
.sbox { width: 959px; border: 1px solid #1a1a1a; border-bottom: 0; display: flex; gap: 2px; padding: 2px 1px 0; box-shadow: inset 0 1px #3c3c3c; }
.sbox b { width: 21px; background: #363634; border: 1px solid #222; display: flex; align-items: center; justify-content: center; }
.prog { flex: 1; background: #1b1b1b; border: 1px solid #151515; }
.cursor { position: absolute; left: 974px; top: 250px; }
</style>
